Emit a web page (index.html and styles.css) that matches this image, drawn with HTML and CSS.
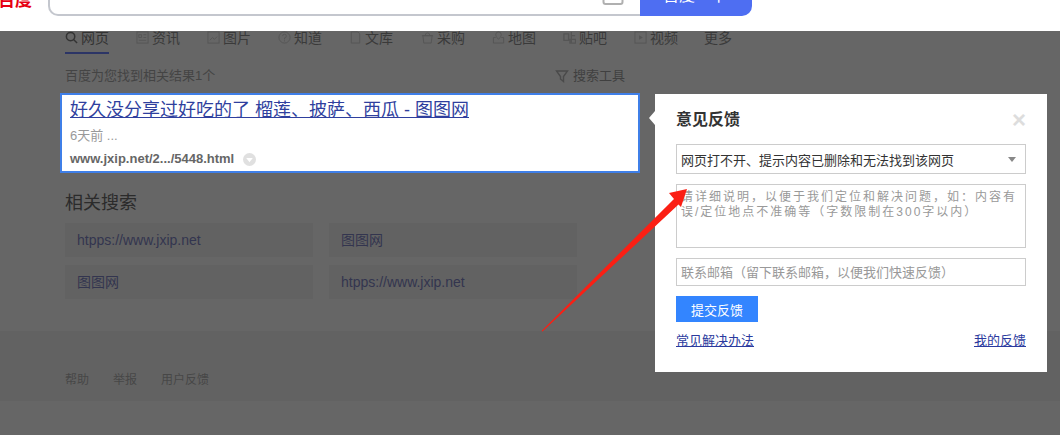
FILE: index.html
```html
<!DOCTYPE html>
<html lang="zh-CN">
<head>
<meta charset="utf-8">
<title>百度搜索</title>
<link rel="stylesheet" href="styles.css">
</head>
<body>
<header class="top">
  <div class="logo">百度</div>
  <div class="searchbox">
    <svg class="camera" width="22" height="22" viewBox="0 0 22 22"><rect x="1.5" y="4" width="19" height="16" rx="2" fill="none" stroke="#b0b0b0" stroke-width="2"/></svg>
  </div>
  <button class="searchbtn">百度一下</button>
</header>

<nav class="nav">
  <a class="tab active"><svg class="ic" viewBox="0 0 14 14"><circle cx="6" cy="6" r="4.5" fill="none" stroke="#333" stroke-width="1.6"/><path d="M9.5 9.5L13 13" stroke="#333" stroke-width="1.6"/></svg>网页</a>
  <a class="tab"><svg class="ic" viewBox="0 0 14 14"><rect x="1" y="1" width="12" height="12" fill="none" stroke="#555"/><path d="M3 4h3v3H3zM8 4h3M8 7h3M3 10h8" fill="none" stroke="#555"/></svg>资讯</a>
  <a class="tab"><svg class="ic" viewBox="0 0 14 14"><rect x="1" y="1" width="12" height="12" fill="none" stroke="#555"/><path d="M3 10l3-3 2 2 3-3" fill="none" stroke="#555"/></svg>图片</a>
  <a class="tab"><svg class="ic" viewBox="0 0 14 14"><circle cx="7" cy="7" r="6" fill="none" stroke="#555"/><path d="M5 5.500a2 2 0 1 1 2 2v1.500M7 10v1.200" fill="none" stroke="#555"/></svg>知道</a>
  <a class="tab tight"><svg class="ic" viewBox="0 0 14 14"><path d="M2.500 1h7l2 2v10h-9z" fill="none" stroke="#555"/></svg>文库</a>
  <a class="tab"><svg class="ic" viewBox="0 0 14 14"><path d="M2 5h10l-1 8H3zM4.500 5a2.500 3 0 0 1 5 0M1 5h12" fill="none" stroke="#555"/></svg>采购</a>
  <a class="tab"><svg class="ic" viewBox="0 0 14 14"><path d="M4 7H1.500v6h11V7H10M7 1a3 3 0 0 0-3 3c0 2 3 5 3 5s3-3 3-5a3 3 0 0 0-3-3z" fill="none" stroke="#555"/></svg>地图</a>
  <a class="tab"><svg class="ic" viewBox="0 0 14 14"><path d="M1 3h5v7H1zM9 1v12M9 5h4M7.500 9h6v4h-6z" fill="none" stroke="#555" stroke-width="1.400"/></svg>贴吧</a>
  <a class="tab last"><svg class="ic" viewBox="0 0 14 14"><rect x="1" y="1" width="12" height="12" fill="none" stroke="#555"/><path d="M5.500 4.500v5l4-2.500z" fill="#555"/></svg>视频</a>
  <a class="tab more">更多</a>
</nav>

<div class="meta">
  <span class="count">百度为您找到相关结果1个</span>
  <span class="tools"><svg class="filter" viewBox="0 0 14 14"><path d="M1.500 2h11L8.500 7.500V12.500L5.500 10V7.500z" fill="none" stroke="#4a4a4a" stroke-width="1.400"/></svg>搜索工具</span>
</div>

<article class="result">
  <a class="title">好久没分享过好吃的了 榴莲、披萨、西瓜 - 图图网</a>
  <p class="snippet">6天前 ...</p>
  <p class="url">www.jxip.net/2.../5448.html<svg class="badge" viewBox="0 0 12 12"><circle cx="6" cy="6" r="6" fill="#e0e0e0"/><path d="M3 4.500h6L6 8.500z" fill="#fff"/></svg></p>
</article>

<section class="related">
  <h2 class="rel-title">相关搜索</h2>
  <div class="rel-grid">
    <a class="chip">htpps://www.jxip.net</a>
    <a class="chip">图图网</a>
    <a class="chip">图图网</a>
    <a class="chip">htpps://www.jxip.net</a>
  </div>
</section>

<footer class="foot">
  <a>帮助</a><a>举报</a><a>用户反馈</a>
</footer>

<aside class="panel">
  <span class="notch"></span>
  <div class="panel-head">
    <h3 class="panel-title">意见反馈</h3>
    <span class="close">×</span>
  </div>
  <div class="select">网页打不开、提示内容已删除和无法找到该网页<i class="caret"></i></div>
  <textarea class="area" placeholder="请详细说明，以便于我们定位和解决问题，如：内容有误/定位地点不准确等（字数限制在300字以内）"></textarea>
  <input class="mail" placeholder="联系邮箱（留下联系邮箱，以便我们快速反馈）">
  <button class="submit">提交反馈</button>
  <div class="links"><a>常见解决办法</a><a>我的反馈</a></div>
</aside>

<svg class="arrow" width="160" height="155" viewBox="0 0 160 155">
  <path d="M1.500 149 L134 17 L129 11 L147 7 L141 25 L138.500 22.500 L2.500 149.500 Z" fill="#fb1f14"/>
</svg>
</body>
</html>
```
FILE: styles.css
```css
* { box-sizing: border-box; }
html, body { margin: 0; padding: 0; }
body {
  position: relative;
  width: 1060px;
  height: 435px;
  overflow: hidden;
  background: #666;
  color: #333;
  font-family: "Liberation Sans", "Noto Sans CJK SC", sans-serif;
}
a { display: inline-block; }
p, h2, h3 { margin: 0; font-weight: normal; }

.top {
  display: flex;
  height: 31px;
  overflow: hidden;
  background: #fff;
}
.logo {
  flex: none;
  width: 48px;
  height: 30px;
  margin-top: -14px;
  text-indent: -2px;
  line-height: 30px;
  font-size: 17px;
  font-weight: 700;
  color: #e60012;
  white-space: nowrap;
}
.searchbox {
  position: relative;
  flex: none;
  width: 592px;
  height: 46px;
  margin-top: -30px;
  border: 2px solid #c4c7ce;
  border-right: 0;
  border-radius: 0 0 0 10px;
  background: #fff;
}
.camera { position: absolute; right: 16px; top: 12px; }
.searchbtn {
  flex: none;
  width: 112px;
  height: 46px;
  margin-top: -30px;
  padding: 2px 2px 0 0;
  border: 0;
  border-radius: 0 0 10px 0;
  background: #4e6ef2;
  color: #fff;
  font: 16px "Liberation Sans", "Noto Sans CJK SC", sans-serif;
}

.nav {
  display: flex;
  height: 23px;
  margin-left: 65px;
  font-size: 14px;
  line-height: 14px;
  color: #3a3a3a;
}
.tab {
  display: flex;
  align-items: flex-start;
  height: 23px;
  margin-right: 27px;
  white-space: nowrap;
}
.tab.tight { margin-right: 28px; }
.tab.last { margin-right: 26px; }
.tab.active { border-bottom: 2px solid #2c3566; color: #333; }
.ic { flex: none; width: 13px; height: 13px; margin: 0 3px 0 0; }

.meta {
  display: flex;
  height: 39px;
  margin: 0 0 0 65px;
  padding-top: 14px;
  font-size: 13px;
  line-height: 16px;
  color: #444;
}
.count { width: 490px; }
.tools { display: flex; color: #404040; }
.filter { width: 14px; height: 14px; margin: 1px 4px 0 0; }

.result {
  width: 580px;
  height: 80px;
  margin: 0 0 0 60px;
  padding: 3px 8px 0;
  border: 2px solid #3f7fe8;
  background: #fff;
}
.title {
  display: block;
  font-size: 18px;
  line-height: 24px;
  color: #2f3f9e;
  text-decoration: underline;
  white-space: nowrap;
}
.snippet { margin-top: 5px; font-size: 13px; line-height: 18px; color: #999; }
.url {
  display: flex;
  align-items: center;
  margin-top: 6px;
  font-size: 13px;
  line-height: 16px;
  font-weight: 700;
  color: #666;
}
.badge { width: 13px; height: 13px; margin-left: 9px; }

.related { margin: 18px 0 0 65px; }
.rel-title { font-size: 18px; line-height: 24px; color: #2b2b2b; }
.rel-grid {
  display: grid;
  grid-template-columns: 248px 248px;
  grid-auto-rows: 34px;
  gap: 8px 16px;
  margin-top: 8px;
}
.chip {
  padding-left: 12px;
  background: #626262;
  font-size: 14px;
  line-height: 34px;
  color: #33354f;
}

.foot {
  display: flex;
  gap: 24px;
  height: 70px;
  margin-top: 32px;
  padding: 40px 0 0 65px;
  background: #626262;
  font-size: 12px;
  line-height: 18px;
  color: #474747;
}

.panel {
  position: absolute;
  left: 655px;
  top: 94px;
  width: 392px;
  height: 278px;
  padding: 1px 21px 0;
  background: #fff;
  font-size: 13px;
}
.notch {
  position: absolute;
  left: -6px;
  top: 17px;
  border-top: 7px solid transparent;
  border-bottom: 7px solid transparent;
  border-right: 6px solid #fff;
}
.panel-head {
  display: flex;
  justify-content: space-between;
  height: 49px;
  padding-top: 14px;
}
.panel-title { font-size: 16px; line-height: 22px; font-weight: 700; color: #333; }
.close { font-size: 24px; line-height: 22px; font-weight: 700; color: #ddd; }
.select {
  display: flex;
  align-items: center;
  justify-content: space-between;
  width: 350px;
  height: 30px;
  padding: 0 9px 0 4px;
  border: 1px solid #ccc;
  color: #333;
}
.caret {
  width: 0;
  height: 0;
  border-left: 4px solid transparent;
  border-right: 4px solid transparent;
  border-top: 5px solid #888;
}
.area {
  display: block;
  width: 350px;
  height: 64px;
  margin-top: 10px;
  padding: 5px 4px;
  border: 1px solid #ccc;
  border-radius: 0;
  outline: 0;
  resize: none;
  font: 12px/15px "Liberation Sans", "Noto Sans CJK SC", sans-serif;
  letter-spacing: 2px;
}
.mail {
  display: block;
  width: 350px;
  height: 28px;
  margin-top: 10px;
  padding: 0 4px;
  border: 1px solid #ccc;
  border-radius: 0;
  outline: 0;
  font: 13px "Liberation Sans", "Noto Sans CJK SC", sans-serif;
}
.area::placeholder, .mail::placeholder { color: #999; opacity: 1; }
.submit {
  display: block;
  width: 82px;
  height: 26px;
  margin-top: 10px;
  padding: 0;
  border: 0;
  background: #3385ff;
  color: #fff;
  font: 13px "Liberation Sans", "Noto Sans CJK SC", sans-serif;
}
.links {
  display: flex;
  justify-content: space-between;
  width: 350px;
  margin-top: 10px;
  line-height: 18px;
  color: #2b3a9e;
  text-decoration: underline;
}

.arrow {
  position: absolute;
  left: 540px;
  top: 182px;
  pointer-events: none;
}
```
